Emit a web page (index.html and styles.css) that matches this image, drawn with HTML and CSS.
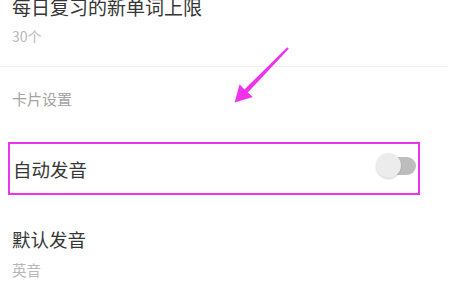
FILE: index.html
```html
<!DOCTYPE html>
<html lang="zh-CN">
<head>
<meta charset="utf-8">
<link rel="stylesheet" href="styles.css">
</head>
<body>
<div class="page">
  <div class="item first">
    <div class="title title-lg">每日复习的新单词上限</div>
    <div class="sub">30个</div>
  </div>
  <div class="divider"></div>
  <div class="section">卡片设置</div>
  <div class="row highlight">
    <div class="title">自动发音</div>
    <div class="toggle"><span class="track"></span><span class="knob"></span></div>
  </div>
  <div class="item second">
    <div class="title">默认发音</div>
    <div class="sub sub-2">英音</div>
  </div>
  <svg class="arrow" width="453" height="300" viewBox="0 0 453 300">
    <polygon points="287.2,47.2 244.4,89.6 239.6,84.2 234.6,102.4 252.8,97 247.8,92.4 288.8,48.8" fill="#ee33ee"/>
  </svg>
</div>
</body>
</html>
```
FILE: styles.css
```css
html, body {
  margin: 0;
  padding: 0;
  background: #ffffff;
}
body {
  font-family: "Noto Sans CJK SC", "Noto Sans", sans-serif;
  overflow: hidden;
}
.page {
  position: relative;
  width: 453px;
  height: 300px;
  overflow: hidden;
}
.item {
  padding-left: 12px;
}
.first {
  margin-top: -5px;
}
.title {
  font-size: 18.5px;
  line-height: 24px;
  color: #363636;
}
.title-lg {
  font-size: 19px;
}
.sub {
  font-size: 14px;
  line-height: 16px;
  color: #b8b8b8;
  margin-top: 9px;
}
.sub-2 {
  font-size: 14.5px;
  margin-top: 11px;
}
.divider {
  margin-top: 22px;
  height: 1px;
  width: 448px;
  background: #f0f0f0;
}
.section {
  margin-top: 22px;
  padding-left: 12px;
  font-size: 15px;
  line-height: 20px;
  color: #a3a3a3;
}
.row {
  display: flex;
  align-items: center;
  justify-content: space-between;
}
.highlight {
  box-sizing: border-box;
  margin-top: 33px;
  margin-left: 8px;
  width: 412px;
  height: 53px;
  border: 2px solid #ee33ee;
  padding: 0 2px 0 3px;
}
.toggle {
  position: relative;
  width: 40px;
  height: 25px;
  margin-bottom: 6px;
}
.track {
  position: absolute;
  right: 0;
  top: 4px;
  width: 32px;
  height: 18px;
  border-radius: 9px;
  background: #bdbdbd;
}
.knob {
  position: absolute;
  left: 0;
  top: 0;
  width: 25px;
  height: 25px;
  border-radius: 50%;
  background: #ececec;
  box-shadow: 0 1px 2px rgba(0, 0, 0, 0.18);
}
.second {
  margin-top: 32px;
}
.arrow {
  position: absolute;
  left: 0;
  top: 0;
  pointer-events: none;
}
```
